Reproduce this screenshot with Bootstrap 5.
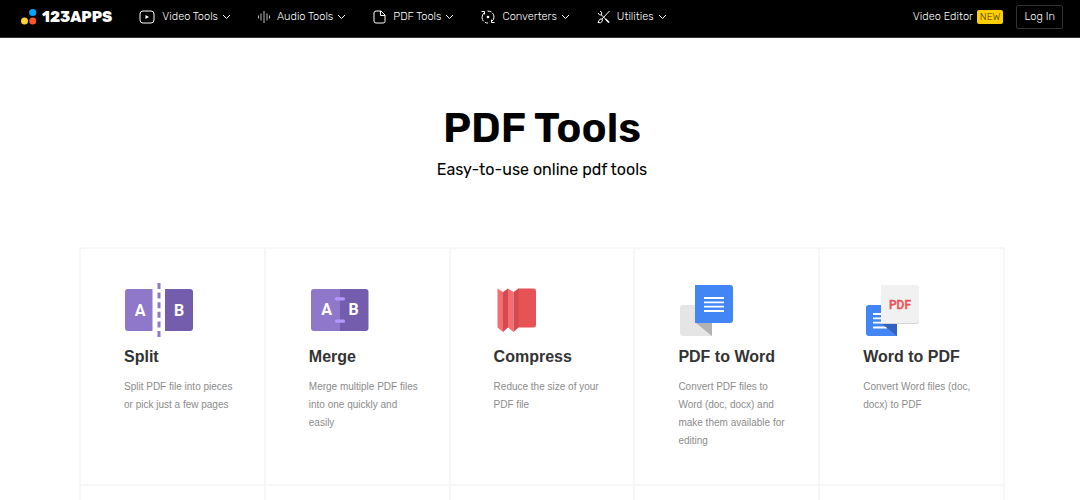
<!DOCTYPE html>
<html lang="en">
<head>
<meta charset="utf-8">
<meta name="viewport" content="width=device-width, initial-scale=1">
<title>PDF Tools - 123apps</title>
<link href="https://cdn.jsdelivr.net/npm/bootstrap@5.3.0/dist/css/bootstrap.min.css" rel="stylesheet">
<style>
body{font-family:"Liberation Sans",Arial,sans-serif;color:#000}
.topbar{background:#000;border-bottom:1px solid #333;padding:5px 17px 8px 20px;min-height:38px;font-family:Rubik,Roboto,sans-serif;font-weight:300}
.topbar a,.topbar button{color:#fff;text-decoration:none;font-size:11px;line-height:16px;font-weight:300}
.topbar .logo-word{font-family:Rubik,Inter,sans-serif;font-weight:800;font-size:15px;line-height:24px}
.menus{gap:27px;margin-left:27px}
.menus button{background:none;border:0;padding:0;gap:7px}
.menus .chev{margin-left:-3px}
.topbar .new-tag{background:#ffcf00;color:#4a3b00;border-radius:2px;font-size:10px;line-height:14px;padding:0 3px}
.topbar .login{background:none;border:1px solid #333;border-radius:2px;padding:2px 7px;margin-left:13px;line-height:18px}
.hero{padding:66px 0 65px}
.hero h1{font-family:Rubik,Inter,sans-serif;font-weight:600;font-size:42px;line-height:48px;margin:0}
.hero p{font-family:Rubik,Inter,sans-serif;font-size:16px;line-height:24px;margin:6px 0 0}
.tools{width:calc(100% - 150px);max-width:927px;border-top:2px solid #f7f7f7;border-left:2px solid #f7f7f7}
.tools .cell{border-right:2px solid #f7f7f7}
.tools .filled{border-bottom:2px solid #f7f7f7;min-height:237px;padding:33px 27px 34px 43px}
.cell svg{display:block}
.cell h2{font-size:16px;line-height:20px;font-weight:700;color:#333;margin:8px 0 11px}
.cell p{font-size:10px;line-height:18px;color:#8c8c8c;margin:0}
.next{min-height:13px}
</style>
</head>
<body class="bg-white d-flex flex-column min-vh-100">
<header class="topbar d-flex align-items-center">
  <a href="#" class="d-flex align-items-center">
    <svg width="22" height="18" viewBox="0 0 22 18"><circle cx="12.7" cy="4.5" r="3.6" fill="#00a3ff"/><circle cx="4.5" cy="13" r="3.5" fill="#ffd42e"/><circle cx="12.7" cy="13" r="3.5" fill="#ff5427"/></svg>
    <span class="logo-word">123APPS</span>
  </a>
  <nav class="menus d-flex align-items-center text-nowrap">
    <button type="button" class="d-flex align-items-center"><svg width="16" height="14" viewBox="0 0 16 14" fill="none" stroke="#fff"><rect x="1" y="1" width="14" height="12" rx="3"/><path d="M6.5 5v4L10 7z" fill="#fff" stroke="none"/></svg><span>Video Tools</span><svg class="chev" width="9" height="6" viewBox="0 0 9 6" fill="none" stroke="#fff"><path d="M1 1l3.5 3.5L8 1"/></svg></button>
    <button type="button" class="d-flex align-items-center"><svg width="12" height="14" viewBox="0 0 12 14" stroke="#fff" stroke-opacity=".75"><path d="M.5 5.5v3M3 3.5v7M6 1v12M9 3.500v7M11.500 5.500v3"/></svg><span>Audio Tools</span><svg class="chev" width="9" height="6" viewBox="0 0 9 6" fill="none" stroke="#fff"><path d="M1 1l3.500 3.500L8 1"/></svg></button>
    <button type="button" class="d-flex align-items-center"><svg width="13" height="14" viewBox="0 0 13 14" fill="none" stroke="#fff"><path d="M3 1h5l4 4v6.500Q12 13 10 13H3Q1 13 1 11V3Q1 1 3 1zM7.500 1v4.500H12"/></svg><span>PDF Tools</span><svg class="chev" width="9" height="6" viewBox="0 0 9 6" fill="none" stroke="#fff"><path d="M1 1l3.500 3.500L8 1"/></svg></button>
    <button type="button" class="d-flex align-items-center"><svg width="14" height="14" viewBox="0 0 14 14" fill="none" stroke="#fff"><path d="M.5 1.500H3.500V4.500M3.500 2.500Q1 4.500 1 7.500Q1.200 10 2.500 11.200M4 12.300Q5.500 13.200 7 13M6.500 1.100Q9 1 10.500 2M11.500 3Q13 4.700 13 7Q13 9.800 10.500 11.700M10.500 9.500v3h3"/><circle cx="7" cy="7" r="1.300" fill="#fff" stroke="none"/></svg><span>Converters</span><svg class="chev" width="9" height="6" viewBox="0 0 9 6" fill="none" stroke="#fff"><path d="M1 1l3.500 3.500L8 1"/></svg></button>
    <button type="button" class="d-flex align-items-center"><svg width="13" height="14" viewBox="0 0 13 14" fill="none" stroke="#fff"><path d="M12.500 1L5 9M5 9Q2.500 8.500 2 10.500L1 12.500Q4 13.500 5 11.500T5 9M4.500 5L12 12.500M3 1L4.800 2.500L4.500 5L2.500 4.800L1 3"/><path d="M8.500 9L12 12.500" stroke-width="1.500"/></svg><span>Utilities</span><svg class="chev" width="9" height="6" viewBox="0 0 9 6" fill="none" stroke="#fff"><path d="M1 1l3.500 3.500L8 1"/></svg></button>
  </nav>
  <div class="ms-auto d-flex align-items-center text-nowrap">
    <a href="#" class="d-flex align-items-center gap-1">Video Editor <span class="new-tag">NEW</span></a>
    <button type="button" class="login">Log In</button>
  </div>
</header>
<main class="flex-grow-1 d-flex flex-column align-items-center ps-1">
  <section class="hero text-center">
    <h1>PDF Tools</h1>
    <p>Easy-to-use online pdf tools</p>
  </section>
  <section class="tools flex-grow-1 d-flex flex-column">
    <div class="row row-cols-5 g-0">
      <article class="col cell filled">
        <svg width="72" height="57" viewBox="0 0 72 57"><path d="M28.500 7H4Q1 7 1 10v36q0 3 3 3h24.500z" fill="#8f78c9"/><path d="M41 7h25q3 0 3 3v36q0 3-3 3H41z" fill="#745dac"/><path d="M35 1v54" stroke="#8f78c9" stroke-width="3" stroke-dasharray="6 3.600"/><g fill="#fff" font-family="Roboto,sans-serif" font-weight="700" font-size="16" text-anchor="middle"><text x="16" y="34">A</text><text x="55" y="34">B</text></g></svg>
        <h2>Split</h2><p>Split PDF file into pieces or pick just a few pages</p>
      </article>
      <article class="col cell filled">
        <svg width="72" height="57" viewBox="0 0 72 57"><path d="M31 7H5Q2 7 2 10v36q0 3 3 3h26z" fill="#8f78c9"/><path d="M31 7h25.500q3 0 3 3v36q0 3-3 3H31z" fill="#745dac"/><path d="M27.500 16.800h7M27.500 39.200h7" stroke="#b498ff" stroke-width="3.200" stroke-linecap="round"/><g fill="#fff" font-family="Roboto,sans-serif" font-weight="700" font-size="16" text-anchor="middle"><text x="17.500" y="33">A</text><text x="44.500" y="33">B</text></g></svg>
        <h2>Merge</h2><p>Merge multiple PDF files into one quickly and easily</p>
      </article>
      <article class="col cell filled">
        <svg width="72" height="57" viewBox="0 0 72 57"><path d="M24 6.500h15q3 0 3 3v33q0 3-3 3H24z" fill="#e55357"/><path d="M3.500 6.500L9 10v40l-5.500-4.500zM14 6.500L19.500 10v40L14 45.500z" fill="#f46d71"/><path d="M9 10l5-3.500v39L9 50zM19.500 10l5-3.500v39l-5 4.500z" fill="#d34b51"/></svg>
        <h2>Compress</h2><p>Reduce the size of your PDF file</p>
      </article>
      <article class="col cell filled">
        <svg width="72" height="57" viewBox="0 0 72 57"><path d="M18 23H5q-3 0-3 3v25q0 3 3 3h29V41H18z" fill="#e5e5e5"/><path d="M18 41h16v13z" fill="#b2b2b2"/><path d="M17 3h35q3 0 3 3v32q0 3-3 3H17z" fill="#4285f4"/><path d="M26 16h20M26 20.300h20M26 24.600h20M26 29h20" stroke="#fff" stroke-width="1.800"/></svg>
        <h2>PDF to Word</h2><p>Convert PDF files to Word (doc, docx) and make them available for editing</p>
      </article>
      <article class="col cell filled">
        <svg width="72" height="57" viewBox="0 0 72 57"><path d="M19 23H6q-3 0-3 3v25q0 3 3 3h28V41H19z" fill="#4285f4"/><path d="M10 32h9M10 36.300h9M10 40.600h9M10 45.500h14" stroke="#fff" stroke-width="1.800"/><path d="M18 41h16v13z" fill="#3461c1"/><path d="M18 4h35q3 0 3 3v32q0 3-3 3H18z" fill="#d6d6d6"/><path d="M18 3h35q3 0 3 3v32q0 3-3 3H18z" fill="#f1f1f1"/><text x="37" y="27" fill="#e9545b" stroke="#e9545b" stroke-width=".4" font-family="Roboto,sans-serif" font-weight="500" font-size="12" text-anchor="middle">PDF</text></svg>
        <h2>Word to PDF</h2><p>Convert Word files (doc, docx) to PDF</p>
      </article>
    </div>
    <div class="row row-cols-5 g-0 next flex-grow-1"><div class="col cell"></div><div class="col cell"></div><div class="col cell"></div><div class="col cell"></div><div class="col cell"></div></div>
  </section>
</main>
<script src="https://cdn.jsdelivr.net/npm/bootstrap@5.3.0/dist/js/bootstrap.bundle.min.js"></script>
</body>
</html>
